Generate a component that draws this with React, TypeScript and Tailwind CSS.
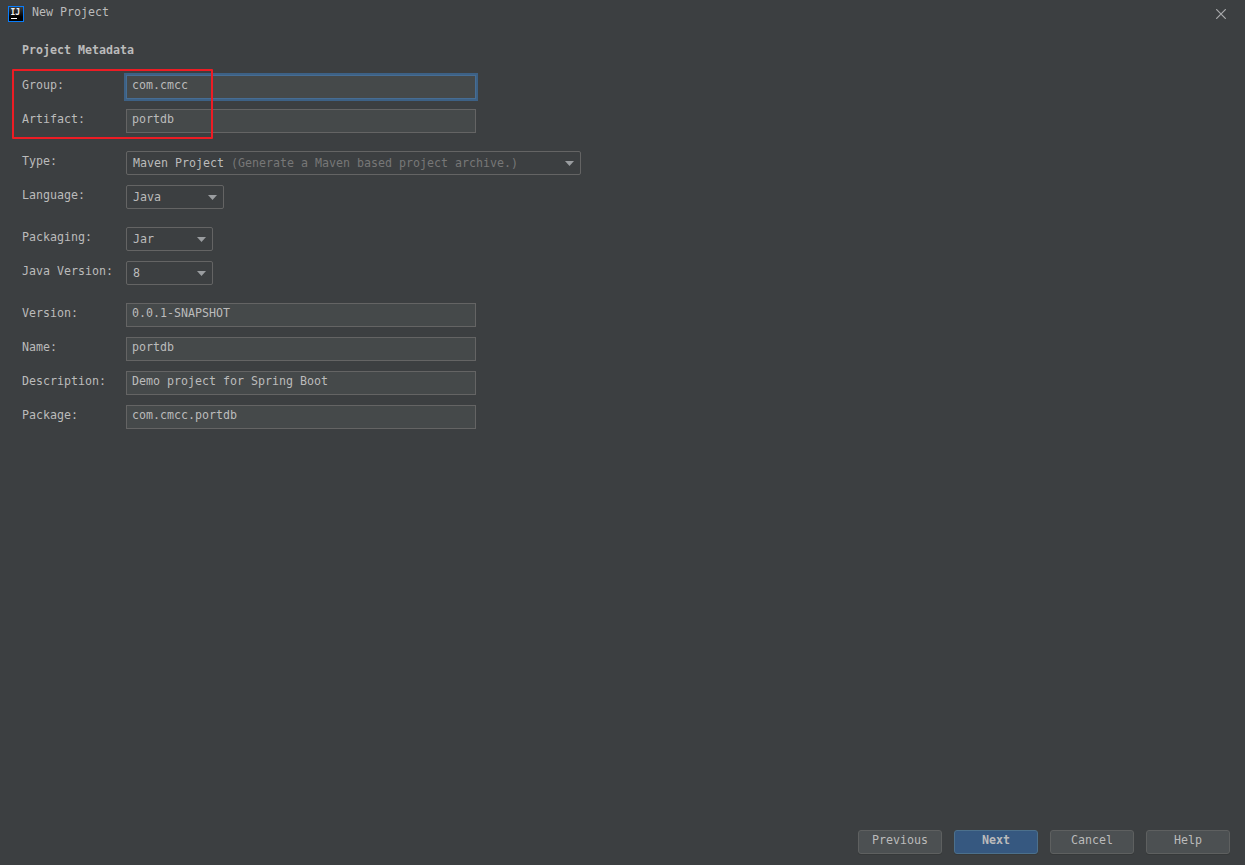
import React from "react";

function Label({ children }: { children: string }) {
  return <label className="w-[104px] shrink-0 pb-[3px] leading-[21px]">{children}</label>;
}

function TextField({ label, value, focused = false }: { label: string; value: string; focused?: boolean }) {
  return (
    <div className="flex h-6">
      <Label>{label}</Label>
      <div
        className={
          focused
            ? "h-6 w-[350px] border border-[#466d94] bg-[#45494a] pl-[5px] leading-[19px] outline-2 outline-[#3d6185]"
            : "h-6 w-[350px] border border-[#646464] bg-[#45494a] pl-[5px] leading-[19px]"
        }
      >
        {value}
      </div>
    </div>
  );
}

function Combo({ label, value, hint, width }: { label: string; value: string; hint?: string; width: string }) {
  return (
    <div className="flex h-6">
      <Label>{label}</Label>
      <div
        className={`${width} flex h-6 items-center justify-between rounded-[2px] border border-[#646464] pr-[6px] pl-[6px] leading-[22px]`}
      >
        <span className="whitespace-pre">
          {value}
          {hint && <span className="text-[#777777]"> {hint}</span>}
        </span>
        <svg width="9" height="5" viewBox="0 0 9 5" className="mt-px">
          <path d="M0 0H9L4.5 5Z" fill="#9a9da0" />
        </svg>
      </div>
    </div>
  );
}

function Button({ children, primary = false }: { children: string; primary?: boolean }) {
  return (
    <button
      className={
        primary
          ? "h-6 w-[84px] rounded-[3px] border border-[#4c708c] bg-[#365880] pb-[3px] leading-[19px] font-bold shadow-[0_1px_0_#36393a]"
          : "h-6 w-[84px] rounded-[3px] border border-[#5e6060] bg-[#4c5052] pb-[3px] leading-[19px] shadow-[0_1px_0_#36393a]"
      }
    >
      {children}
    </button>
  );
}

export default function App() {
  return (
    <div className="relative flex h-[865px] w-[1245px] flex-col overflow-hidden bg-[#3c3f41] font-['DejaVu_Sans_Mono',monospace] text-[11.63px] text-[#bbbbbb]">
      <header className="flex h-7 items-start pl-2">
        <svg width="16" height="16" viewBox="0 0 16 16" className="mt-[6px]">
          <defs>
            <linearGradient id="logo" x1="0" y1="0" x2="0" y2="1">
              <stop offset="0" stopColor="#3a3e42" />
              <stop offset="0.7" stopColor="#000000" />
            </linearGradient>
          </defs>
          <rect width="16" height="16" fill="#087cfa" />
          <rect x="1" y="1" width="14" height="14" fill="url(#logo)" />
          <text x="2.5" y="9" fill="#f2f2f2" className="text-[8px] font-bold">
            IJ
          </text>
          <rect x="3" y="12" width="6" height="1" fill="#ffffff" />
        </svg>
        <span className="ml-2 leading-[25px]">New Project</span>
        <svg width="10" height="10" viewBox="0 0 10 10" className="mt-[9px] mr-[19px] ml-auto">
          <path d="M0.2 0.2L9.8 9.8M9.8 0.2L0.2 9.8" stroke="#a9abac" strokeWidth="1.2" />
        </svg>
      </header>
      <main className="flex flex-1 flex-col pl-[22px]">
        <h1 className="mt-[11px] h-9 leading-[22px] font-bold">Project Metadata</h1>
        <div className="flex flex-col gap-[18px]">
          <div className="flex flex-col gap-[10px]">
            <TextField label="Group:" value="com.cmcc" focused />
            <TextField label="Artifact:" value="portdb" />
          </div>
          <div className="flex flex-col gap-[10px]">
            <Combo label="Type:" value="Maven Project" hint="(Generate a Maven based project archive.)" width="w-[455px]" />
            <Combo label="Language:" value="Java" width="w-[98px]" />
          </div>
          <div className="flex flex-col gap-[10px]">
            <Combo label="Packaging:" value="Jar" width="w-[87px]" />
            <Combo label="Java Version:" value="8" width="w-[87px]" />
          </div>
          <div className="flex flex-col gap-[10px]">
            <TextField label="Version:" value="0.0.1-SNAPSHOT" />
            <TextField label="Name:" value="portdb" />
            <TextField label="Description:" value="Demo project for Spring Boot" />
            <TextField label="Package:" value="com.cmcc.portdb" />
          </div>
        </div>
      </main>
      <footer className="flex justify-end gap-3 pr-[15px] pb-[11px]">
        <Button>Previous</Button>
        <Button primary>Next</Button>
        <Button>Cancel</Button>
        <Button>Help</Button>
      </footer>
      <div className="pointer-events-none absolute top-[69px] left-[12px] h-[70px] w-[201px] rounded-[1px] border-2 border-[#ed1c24]" />
    </div>
  );
}
